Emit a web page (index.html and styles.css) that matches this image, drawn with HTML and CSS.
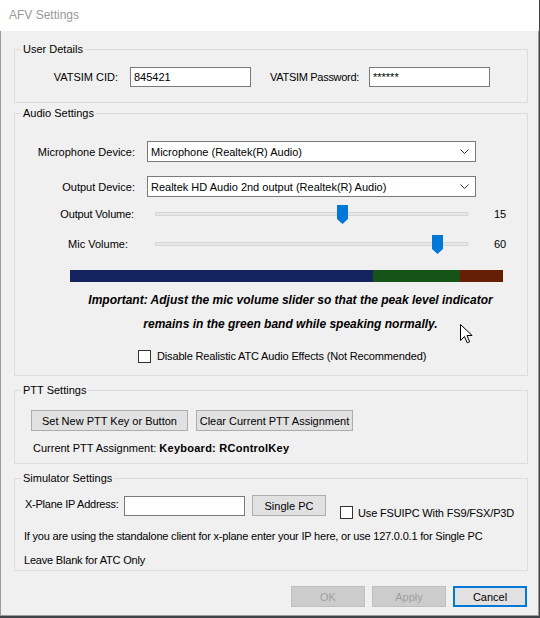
FILE: index.html
```html
<!DOCTYPE html>
<html lang="en">
<head>
  <meta charset="UTF-8">
  <title>AFV Settings</title>
  <link rel="stylesheet" href="styles.css">
</head>
<body>

<div class="window">
  <div class="titlebar">AFV Settings</div>

  <div class="content">
    <fieldset class="group user">
      <legend>User Details</legend>
      <div class="row">
        <label class="lbl cid">VATSIM CID:</label>
        <input class="field cid-input" type="text" value="845421">
        <label class="lbl pwd">VATSIM Password:</label>
        <input class="field pwd-input" type="text" value="******">
      </div>
    </fieldset>

    <fieldset class="group audio">
      <legend>Audio Settings</legend>

      <div class="row combo-row">
        <span class="lbl dev">Microphone Device:</span>
        <div class="combo">
          <span>Microphone (Realtek(R) Audio)</span>
          <svg width="9" height="5" viewBox="0 0 9 5"><polyline points="0.5,0.5 4.5,4.5 8.5,0.5" fill="none" stroke="#333" stroke-width="1"/></svg>
        </div>
      </div>

      <div class="row combo-row second">
        <span class="lbl dev">Output Device:</span>
        <div class="combo">
          <span>Realtek HD Audio 2nd output (Realtek(R) Audio)</span>
          <svg width="9" height="5" viewBox="0 0 9 5"><polyline points="0.5,0.5 4.5,4.5 8.5,0.5" fill="none" stroke="#333" stroke-width="1"/></svg>
        </div>
      </div>

      <div class="row slider-row out">
        <span class="lbl dev vol">Output Volume:</span>
        <div class="slider">
          <div class="track"></div>
          <svg class="thumb" style="left: 182px;" width="11" height="19" viewBox="0 0 11 19"><polygon points="0,0 11,0 11,14 5.5,19 0,14" fill="#0078d7"/></svg>
        </div>
        <span class="value">15</span>
      </div>

      <div class="row slider-row mic">
        <span class="lbl dev mic-lbl">Mic Volume:</span>
        <div class="slider">
          <div class="track"></div>
          <svg class="thumb" style="left: 277px;" width="11" height="19" viewBox="0 0 11 19"><polygon points="0,0 11,0 11,14 5.5,19 0,14" fill="#0078d7"/></svg>
        </div>
        <span class="value">60</span>
      </div>

      <div class="level">
        <div class="band blue"></div>
        <div class="band green"></div>
        <div class="band red"></div>
      </div>

      <p class="important">Important: Adjust the mic volume slider so that the peak level indicator<br>remains in the green band while speaking normally.</p>

      <div class="check-row atc">
        <span class="check"></span>
        <span>Disable Realistic ATC Audio Effects (Not Recommended)</span>
      </div>
    </fieldset>

    <fieldset class="group ptt">
      <legend>PTT Settings</legend>
      <div class="row btn-row">
        <button class="btn wide">Set New PTT Key or Button</button>
        <button class="btn wide">Clear Current PTT Assignment</button>
      </div>
      <div class="current">
        <span>Current PTT Assignment:</span>
        <b>Keyboard: RControlKey</b>
      </div>
    </fieldset>

    <fieldset class="group sim">
      <legend>Simulator Settings</legend>
      <div class="row sim-row">
        <label class="lbl ip">X-Plane IP Address:</label>
        <input class="field ip-input" type="text" value="">
        <button class="btn single">Single PC</button>
        <div class="check-row fsuipc">
          <span class="check"></span>
          <span>Use FSUIPC With FS9/FSX/P3D</span>
        </div>
      </div>
      <p class="note first">If you are using the standalone client for x-plane enter your IP here, or use 127.0.0.1 for Single PC</p>
      <p class="note">Leave Blank for ATC Only</p>
    </fieldset>

    <div class="actions">
      <button class="btn action" disabled>OK</button>
      <button class="btn action" disabled>Apply</button>
      <button class="btn action cancel">Cancel</button>
    </div>
  </div>

  <svg class="cursor" width="13" height="20" viewBox="0 0 13 20"><path d="M0.5,0.5 L0.5,16.5 L4.5,12.5 L7.2,18.8 L9.6,17.8 L7,11.5 L12.2,11.5 Z" fill="#fff" stroke="#000" stroke-width="1" stroke-linejoin="miter"/></svg>
</div>

</body>
</html>
```

FILE: styles.css
```css
body {
  margin: 0;
  padding: 0;
  background: #3c4448;
  font-family: "Liberation Sans", Arial, sans-serif;
  font-size: 11px;
  color: #000;
  white-space: nowrap;
}

.window {
  position: relative;
  width: 539px;
  height: 616px;
  box-sizing: border-box;
  background: #f0f0f0;
  border: 1px solid #9a9a9a;
  border-top: none;
}

.titlebar {
  height: 31px;
  background: #fff;
  color: #999;
  font-size: 12px;
  line-height: 31px;
  padding-left: 9px;
  margin-left: -1px;
  margin-right: -1px;
}

.content {
  padding: 12px 10px 0 13px;
}

/* group boxes */
.group {
  margin: 0;
  padding: 0 6px;
  border: 1px solid #dcdcdc;
  min-width: 0;
}

.group legend {
  padding: 0 2px;
  font-size: 11px;
  line-height: 13px;
}

.row {
  display: flex;
  align-items: center;
}

.lbl {
  text-align: right;
  flex: none;
}

.field {
  box-sizing: border-box;
  height: 20px;
  border: 1px solid #7a7a7a;
  background: #fff;
  font-family: "Liberation Sans", Arial, sans-serif;
  font-size: 11px;
  padding: 0 3px;
  margin: 0;
  outline: none;
}

/* user details */
.user {
  padding-top: 11px;
  padding-bottom: 15px;
}

.cid {
  width: 97px;
}

.cid-input,
.pwd-input {
  width: 121px;
  margin-left: 12px;
}

.pwd {
  width: 100px;
  margin-left: 8px;
  letter-spacing: -0.3px;
}

.pwd-input {
  margin-left: 10px;
}

/* audio */
.audio {
  margin-top: 4px;
  padding-top: 21px;
  padding-bottom: 12px;
}

.dev {
  width: 114px;
}

.combo {
  box-sizing: border-box;
  width: 329px;
  height: 21px;
  margin-left: 12px;
  border: 1px solid #7a7a7a;
  background: #fff;
  display: flex;
  align-items: center;
  justify-content: space-between;
  padding: 0 6px 0 3px;
}

.combo-row.second {
  margin-top: 14px;
}

.slider-row {
  height: 20px;
}

.slider-row.out {
  margin-top: 7px;
}

.slider-row.mic {
  margin-top: 10px;
}

.vol {
  padding-right: 1px;
  box-sizing: border-box;
  letter-spacing: -0.15px;
}

.mic-lbl {
  padding-right: 7px;
  box-sizing: border-box;
}

.slider {
  position: relative;
  width: 313px;
  height: 20px;
  margin-left: 20px;
}

.track {
  box-sizing: border-box;
  height: 4px;
  margin-top: 8px;
  background: #e7e7e7;
  border: 1px solid #d6d6d6;
}

.thumb {
  position: absolute;
  top: 1px;
}

.value {
  margin-left: 26px;
}

.level {
  display: flex;
  width: 433px;
  height: 12px;
  margin: 16px 0 0 49px;
}

.band.blue {
  width: 303px;
  background: #13245f;
}

.band.green {
  width: 87px;
  background: #155316;
}

.band.red {
  width: 43px;
  background: #661e04;
}

.important {
  width: 441px;
  margin: 6px 0 0 49px;
  text-align: center;
  font-size: 12px;
  font-weight: bold;
  font-style: italic;
  line-height: 24px;
}

.check-row {
  display: flex;
  align-items: center;
  letter-spacing: -0.15px;
}

.check {
  box-sizing: border-box;
  width: 13px;
  height: 13px;
  border: 1px solid #333;
  background: #fff;
  flex: none;
}

.check-row.atc {
  height: 14px;
  margin: 13px 0 0 117px;
}

.check-row.atc .check {
  margin-right: 6px;
}

/* ptt */
.ptt {
  margin-top: 8px;
  padding-top: 13px;
  padding-bottom: 8px;
}

.btn {
  box-sizing: border-box;
  height: 21px;
  margin: 0;
  padding: 0;
  background: #e1e1e1;
  border: 1px solid #adadad;
  font-family: "Liberation Sans", Arial, sans-serif;
  font-size: 11px;
  color: #000;
  white-space: nowrap;
}

.btn.wide {
  width: 157px;
}

.btn-row {
  padding-left: 10px;
  gap: 8px;
}

.current {
  margin: 10px 0 0 12px;
  line-height: 14px;
}

.current b {
  letter-spacing: 0.25px;
}

/* simulator */
.sim {
  margin-top: 8px;
  padding-top: 10px;
  padding-bottom: 3px;
}

.sim-row {
  align-items: flex-start;
  height: 21px;
}

.ip {
  width: 93px;
  text-align: left;
  margin: 3px 0 0 4px;
  letter-spacing: -0.25px;
}

.ip-input {
  width: 121px;
  margin: 1px 0 0 6px;
}

.btn.single {
  width: 74px;
  margin-left: 7px;
}

.check-row.fsuipc {
  margin: 11px 0 0 14px;
}

.check-row.fsuipc .check {
  margin-right: 5px;
}

.note {
  margin: 10px 0 0 3px;
  line-height: 14px;
  letter-spacing: -0.2px;
}

.note.first {
  margin-top: 13px;
}

/* dialog buttons */
.actions {
  display: flex;
  justify-content: flex-end;
  gap: 7px;
  margin: 15px 1px 0 0;
}

.btn.action {
  width: 74px;
}

.btn.action:disabled {
  background: #cccccc;
  border-color: #bfbfbf;
  color: #a0a0a0;
}

.btn.cancel {
  border: 2px solid #0078d7;
}

.cursor {
  position: absolute;
  left: 459px;
  top: 324px;
}
```
